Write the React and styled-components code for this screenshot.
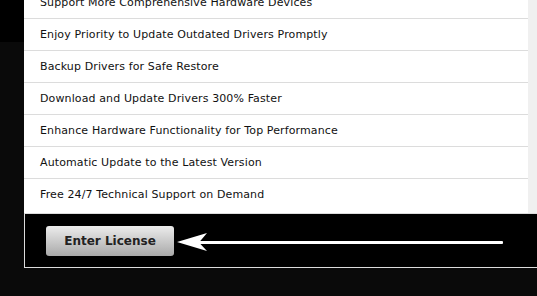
import React from "react";
import styled, { createGlobalStyle } from "styled-components";

const GlobalStyle = createGlobalStyle`
  html, body {
    margin: 0;
    padding: 0;
    background: #0a0a0a;
  }
  * {
    box-sizing: border-box;
  }
`;

const Page = styled.div`
  display: grid;
  grid-template-columns: 24px 1fr;
  width: 537px;
  height: 296px;
  overflow: hidden;
  background: #0a0a0a;
  font-family: "DejaVu Sans", Verdana, sans-serif;
`;

const Gutter = styled.div`
  background: linear-gradient(#000 0, #000 42px, #0a0a0a 42px);
`;

const Main = styled.div`
  display: flex;
  flex-direction: column;
`;

const Content = styled.div`
  display: flex;
  height: 213px;
`;

const List = styled.ul`
  flex: 1;
  margin: 0;
  padding: 0;
  list-style: none;
  background: #fff;
  overflow: hidden;
`;

const Inner = styled.div`
  margin-top: -13px;
`;

const Row = styled.li`
  height: 32px;
  padding-left: 16px;
  line-height: 31px;
  font-size: 11px;
  letter-spacing: 0.12px;
  color: #111;
  border-bottom: 1px solid #dcdcdc;
  white-space: nowrap;
  &:last-child {
    border-bottom: none;
  }
`;

const Strip = styled.div`
  width: 9px;
  background: #f0f0f0;
`;

const Footer = styled.div`
  display: flex;
  align-items: flex-start;
  gap: 3px;
  height: 55px;
  padding: 12px 0 0 21px;
  background: #000;
  border: 1px solid #dcdcdc;
  border-right: none;
`;

const Button = styled.button`
  width: 128px;
  height: 30px;
  padding: 0;
  border: none;
  border-radius: 3px;
  background: linear-gradient(#ececec, #a9a9a9);
  color: #222;
  font-family: "DejaVu Sans", Verdana, sans-serif;
  font-weight: bold;
  font-size: 12px;
  cursor: pointer;
`;

const Arrow = styled.svg`
  display: block;
  margin-top: 7px;
`;

const features = [
  "Support More Comprehensive Hardware Devices",
  "Enjoy Priority to Update Outdated Drivers Promptly",
  "Backup Drivers for Safe Restore",
  "Download and Update Drivers 300% Faster",
  "Enhance Hardware Functionality for Top Performance",
  "Automatic Update to the Latest Version",
  "Free 24/7 Technical Support on Demand",
];

export default function App() {
  return (
    <>
      <GlobalStyle />
      <Page>
        <Gutter />
        <Main>
          <Content>
            <List>
              <Inner>
                {features.map((f) => (
                  <Row key={f}>{f}</Row>
                ))}
              </Inner>
            </List>
            <Strip />
          </Content>
          <Footer>
            <Button>Enter License</Button>
            <Arrow width="327" height="20" viewBox="0 0 327 20">
              <rect x="20" y="8" width="306" height="3" rx="1" fill="#fff" />
              <path d="M0 9 L30 0 L22 9.5 L30 18 Z" fill="#fff" />
            </Arrow>
          </Footer>
        </Main>
      </Page>
    </>
  );
}
